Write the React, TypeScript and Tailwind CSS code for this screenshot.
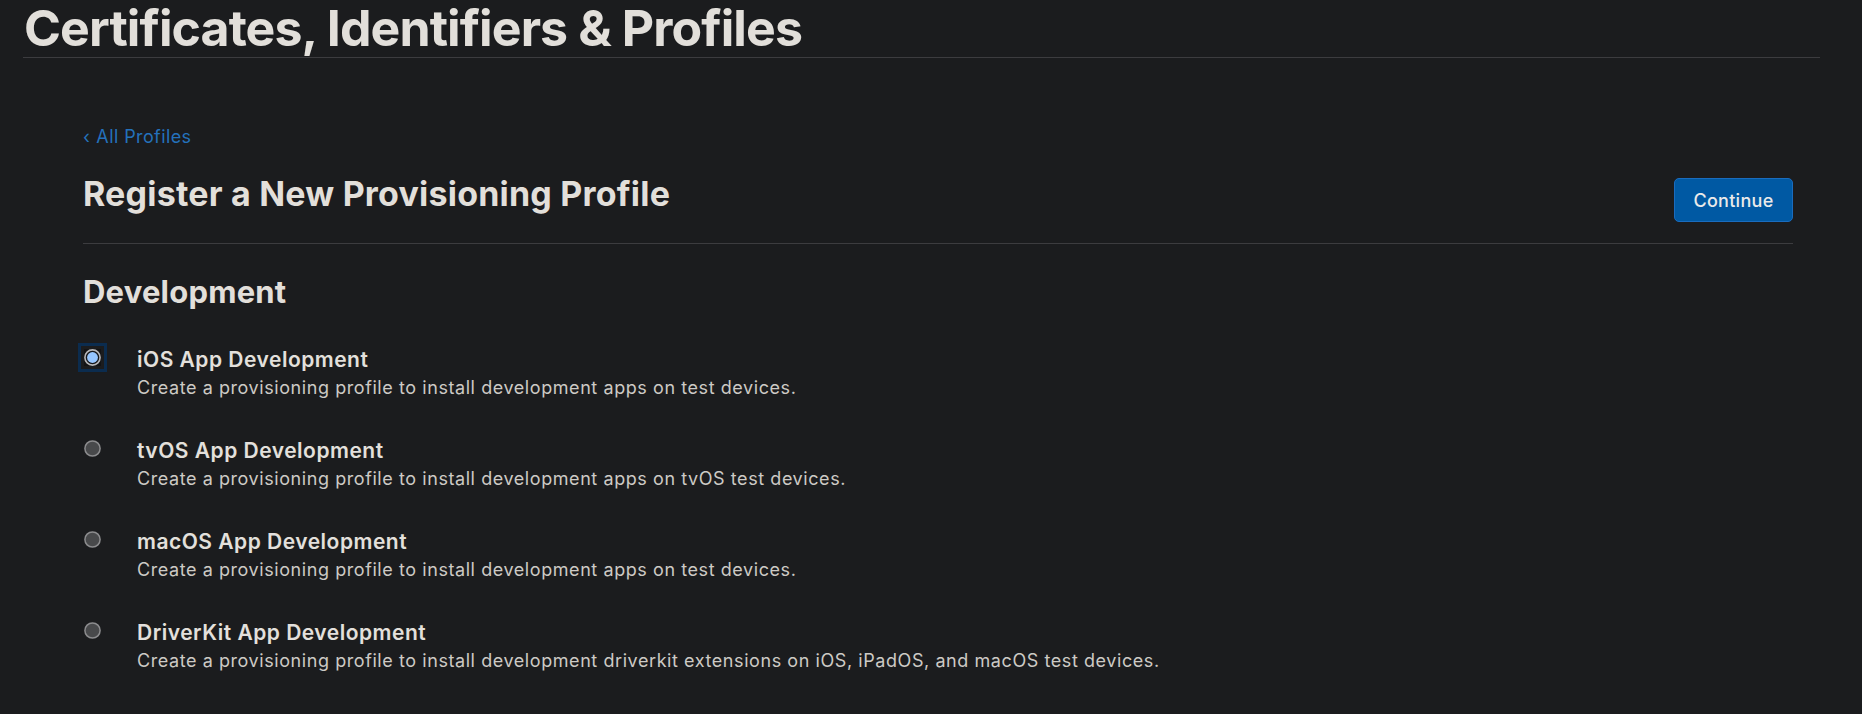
import React from "react";

type Item = { title: string; desc: string; selected?: boolean };

const items: Item[] = [
  {
    title: "iOS App Development",
    desc: "Create a provisioning profile to install development apps on test devices.",
    selected: true,
  },
  {
    title: "tvOS App Development",
    desc: "Create a provisioning profile to install development apps on tvOS test devices.",
  },
  {
    title: "macOS App Development",
    desc: "Create a provisioning profile to install development apps on test devices.",
  },
  {
    title: "DriverKit App Development",
    desc: "Create a provisioning profile to install development driverkit extensions on iOS, iPadOS, and macOS test devices.",
  },
];

function Radio({ selected }: { selected?: boolean }) {
  if (selected) {
    return (
      <span className="block w-[17px] h-[17px] outline-[3px] outline-solid outline-[#0b2c4f] outline-offset-[3px] bg-[#121315]">
        <svg width="17" height="17" viewBox="0 0 17 17" className="block">
          <circle cx="8.5" cy="8.5" r="7.6" fill="#16171a" stroke="#b6b6b8" strokeWidth="1.6" />
          <circle cx="8.5" cy="8.5" r="5.4" fill="#96c6ff" />
        </svg>
      </span>
    );
  }
  return (
    <svg width="17" height="17" viewBox="0 0 17 17" className="block">
      <circle cx="8.5" cy="8.5" r="7.6" fill="#48494b" stroke="#8c8c8e" strokeWidth="1.5" />
    </svg>
  );
}

export default function App() {
  return (
    <div
      className="min-h-[714px] w-full bg-[#1b1c1e] text-[#e2dfda] overflow-hidden"
      style={{ fontFamily: "Inter, 'Noto Sans', 'Liberation Sans', sans-serif" }}
    >
      <header className="ml-[23px] mr-[42px] pb-[1px] border-b border-[#3c3c3f]">
        <h1 className="text-[50px] leading-[56px] font-bold tracking-[-0.9px] pl-[1px]">
          Certificates, Identifiers &amp; Profiles
        </h1>
      </header>

      <main className="ml-[83px] w-[1710px]">
        <a className="mt-[69px] flex items-center gap-[6px] text-[18px] leading-[20px] tracking-[0.4px] text-[#2471bb] w-fit">
          <span className="leading-[20px]">‹</span>
          <span>All Profiles</span>
        </a>

        <div className="mt-[27px] flex justify-between items-start pb-[21px] border-b border-[#3c3c3f]">
          <h2 className="text-[34px] leading-[40px] font-bold tracking-[0.2px]">
            Register a New Provisioning Profile
          </h2>
          <button className="mt-[4px] w-[119px] h-[44px] rounded-[5px] bg-[#0059a3] border border-[#1a6cbe] text-[18px] tracking-[0.3px] font-medium text-[#eaeaea] flex items-center justify-center">
            Continue
          </button>
        </div>

        <h3 className="mt-[30px] text-[31px] leading-[36px] font-bold tracking-[0.2px]">Development</h3>

        <div className="mt-[38px] flex flex-col gap-[39px]">
          {items.map((it) => (
            <label key={it.title} className="flex items-start">
              <div className="w-[54px] shrink-0 pl-[1px] pt-[1px]">
                <Radio selected={it.selected} />
              </div>
              <div className="flex flex-col">
                <div className="text-[21px] leading-[24px] font-semibold tracking-[0.5px] text-[#e3e0dc]">
                  {it.title}
                </div>
                <div className="mt-[4px] text-[18px] leading-[24px] tracking-[0.57px] text-[#cdcac5]">
                  {it.desc}
                </div>
              </div>
            </label>
          ))}
        </div>
      </main>
    </div>
  );
}
